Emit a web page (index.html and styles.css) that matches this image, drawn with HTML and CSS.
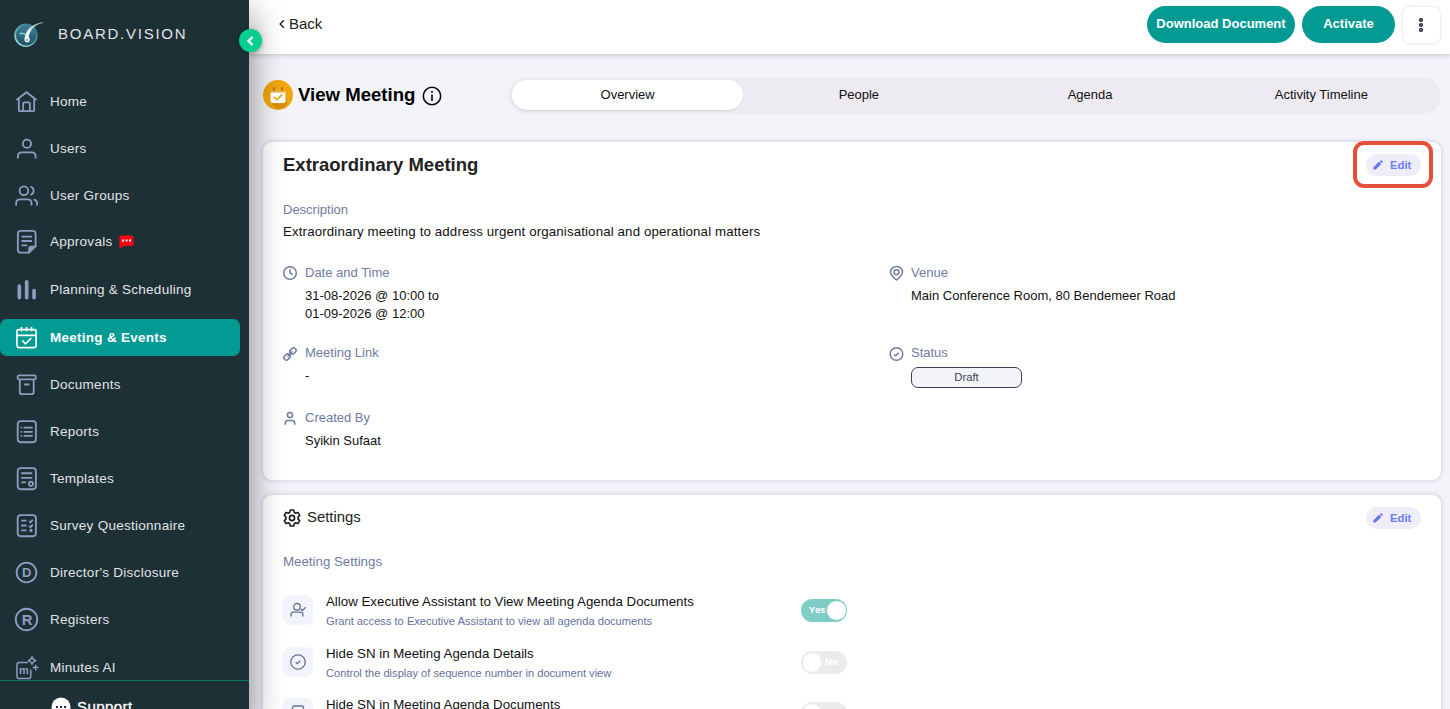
FILE: index.html
```html
<!DOCTYPE html>
<html lang="en">
<head>
    <meta charset="UTF-8">
    <title>Board.Vision - View Meeting</title>
    <meta name="viewport" content="width=device-width, initial-scale=1.0">
    <link rel="stylesheet" href="styles.css">
</head>
<body>
<div class="app">

    <!-- Sidebar -->
    <aside class="sidebar">
        <div class="brand">
            <svg class="brand-logo" width="30" height="28" viewBox="0 0 30 28">
                <defs>
                    <linearGradient id="logoFill" x1="0" y1="0" x2="0" y2="1">
                        <stop offset="0" stop-color="#3f7f9b"/>
                        <stop offset="1" stop-color="#1f5063"/>
                    </linearGradient>
                    <linearGradient id="logoRing" x1="0" y1="1" x2="1" y2="0">
                        <stop offset="0" stop-color="#b5efe4"/>
                        <stop offset="0.5" stop-color="#4f9fa3"/>
                        <stop offset="1" stop-color="#2b6c7e"/>
                    </linearGradient>
                </defs>
                <circle cx="12" cy="15.300" r="10.900" fill="url(#logoFill)" stroke="url(#logoRing)" stroke-width="1.600"/>
                <path d="M28.800 2.500C21 4.500 17 9 14.800 15.500C14.400 17 16.200 18.500 15.700 20.500C15 23 11.300 23 10.600 20.500C10.300 18 11 15.500 11.900 13.500C14 8 20 3.800 28.800 2.500Z" fill="#eefaf8"/>
                <path d="M28.800 2.500C23 3.600 19 6.200 16.500 10C19.500 5.800 23 3.600 28.800 2.500Z" fill="#7fbdb8" stroke="#7fbdb8" stroke-width=".6"/>
                <circle cx="13.200" cy="20" r=".8" fill="#24596c"/>
                <path d="M5.500 13.500h4.500q1.500.2 1.600 2.200" fill="none" stroke="#8fd0cc" stroke-width="1.600"/>
            </svg>
            <span class="brand-name">BOARD.VISION</span>
        </div>
        <nav class="menu">
            <a class="menu-item">
                <svg class="menu-icon" viewBox="0 0 24 24"><path d="M1.500 10.500 12 2.300l10.500 8.200M4 9v12q0 1 1 1h14q1 0 1-1V9M8.500 21.500V14q0-1 1-1h5q1 0 1 1v7.500"/></svg>
                <span>Home</span>
            </a>
            <a class="menu-item">
                <svg class="menu-icon" viewBox="0 0 24 24"><circle cx="12.500" cy="7" r="4.300"/><path d="M3 22.500v-2.500q0-4 4-4h10.500q4 0 4 4v2.500"/></svg>
                <span>Users</span>
            </a>
            <a class="menu-item">
                <svg class="menu-icon" viewBox="0 0 24 24"><circle cx="9.300" cy="7" r="4.500"/><path d="M1.200 22.500v-2.500q0-4 4-4h8q4 0 4 4v2.500M16 2.700a4.400 4.400 0 0 1 0 8.600M19.500 16q3.500.8 3.500 4v2.500"/></svg>
                <span>User Groups</span>
            </a>
            <a class="menu-item menu-item-alert">
                <svg class="menu-icon" viewBox="0 0 24 24"><path d="M14.500 23.700H6q-3 0-3-3V4q0-3 3-3h12.500q3 0 3 3v12.500zM6.800 7h11M6.800 11.500h11M6.800 16h6"/><path class="solid" d="M14.800 23v-3.500q0-2.200 2.200-2.200h4z"/></svg>
                <span>Approvals</span>
                <svg class="menu-alert" width="15" height="14" viewBox="0 0 15 14"><path d="M2 .5h11q1.500 0 1.500 1.500v7.500q0 1.500-1.500 1.500H5L.5 13.500V2q0-1.500 1.500-1.500z" fill="#fb0310"/><path d="M3 4.500h2v2H3zM6.500 4.500h2v2h-2zM10 4.500h2v2h-2z" fill="#fff"/></svg>
            </a>
            <a class="menu-item">
                <svg class="menu-icon" viewBox="0 0 24 24"><path class="bars" d="M4.500 8.500V20.500M12.200 4V20.500M19.900 13V20.500"/></svg>
                <span>Planning &amp; Scheduling</span>
            </a>
            <a class="menu-item active">
                <svg class="menu-icon" viewBox="0 0 24 24"><path d="M4 3.800h16q2 0 2 2V20q0 2.500-2.500 2.500h-15Q2 22.500 2 20V5.800q0-2 2-2zM2 9.800h20M6.800 1v4.500M12 1v4.500M17.200 1v4.500M7.500 15l3.500 3.500 6-6"/></svg>
                <span>Meeting &amp; Events</span>
            </a>
            <a class="menu-item">
                <svg class="menu-icon" viewBox="0 0 24 24"><path d="M4.200 2.500h16q1.500 0 1.500 1.500v1.200q0 1.500-1.500 1.500h-16q-1.500 0-1.500-1.500V4q0-1.500 1.500-1.500zM5 6.700V20q0 2 2 2h10.500q2 0 2-2V6.700M9.500 12h5.500"/></svg>
                <span>Documents</span>
            </a>
            <a class="menu-item">
                <svg class="menu-icon" viewBox="0 0 24 24"><rect x="2.800" y="1.200" width="19" height="22" rx="3"/><path d="M9 8h9.500M9 12.300h9.500M9 16.600h9.500M5.800 8h1.400M5.800 12.300h1.400M5.800 16.600h1.400"/></svg>
                <span>Reports</span>
            </a>
            <a class="menu-item">
                <svg class="menu-icon" viewBox="0 0 24 24"><rect x="2.800" y="1.200" width="19" height="22" rx="3"/><path d="M6.500 6.500h11.500M6.500 11.300h11.500M6.500 16h5"/><circle cx="16.600" cy="17.600" r="2.200"/></svg>
                <span>Templates</span>
            </a>
            <a class="menu-item">
                <svg class="menu-icon" viewBox="0 0 24 24"><rect x="2.800" y="1.200" width="19" height="22" rx="3"/><path d="M6.500 7h5.500M6.500 12h5.500M6.500 17h5.500M14.800 7.500l1.300 1.200 2.500-2.700M14.800 12.500l1.300 1.200 2.500-2.700M15.500 16l2.500 2.500M18 16l-2.500 2.500"/></svg>
                <span>Survey Questionnaire</span>
            </a>
            <a class="menu-item">
                <svg class="menu-icon" viewBox="0 0 24 24"><circle cx="12" cy="12" r="10.300"/><text x="12.200" y="16.800" text-anchor="middle">D</text></svg>
                <span>Director's Disclosure</span>
            </a>
            <a class="menu-item">
                <svg class="menu-icon" viewBox="0 0 24 24"><circle cx="12" cy="12" r="11.200"/><text class="wide" x="12.600" y="17.500" text-anchor="middle">R</text></svg>
                <span>Registers</span>
            </a>
            <a class="menu-item">
                <svg class="menu-icon" viewBox="0 0 24 24"><path class="thin" d="M13.500 6.700H4.500q-2.500 0-2.500 2.500V21q0 2.500 2.500 2.500H14q2.500 0 2.500-2.500v-7M17.800 0.500q.6 3.700 4.300 4.300-3.700.6-4.300 4.300-.6-3.700-4.300-4.300 3.700-.6 4.300-4.300zM21.500 9v6M18.500 12h6"/><text class="small" x="9.300" y="18.500" text-anchor="middle">m</text></svg>
                <span>Minutes AI</span>
            </a>
        </nav>
        <div class="support">
            <svg width="20" height="20" viewBox="0 0 20 20"><circle cx="10" cy="10" r="9.500" fill="#fff"/><path d="M5 9h2v2H5zM9 9h2v2H9zM13 9h2v2h-2z" fill="#1d3036"/></svg>
            <span>Support</span>
        </div>
        <button class="collapse">
            <svg width="10" height="12" viewBox="0 0 10 12"><path d="M6.500 2 2.500 6l4 4" fill="none" stroke="#fff" stroke-width="2.400"/></svg>
        </button>
    </aside>

    <main class="main">
        <!-- Top bar -->
        <header class="topbar">
            <a class="back">
                <svg width="6" height="10" viewBox="0 0 6 10"><path d="M4.800 1.200 1.200 5l3.600 3.800" fill="none" stroke="#222" stroke-width="1.400"/></svg>
                <span>Back</span>
            </a>
            <div class="actions">
                <button class="btn btn-download">Download Document</button>
                <button class="btn btn-activate">Activate</button>
                <button class="btn-more">
                    <svg width="6" height="16" viewBox="0 0 6 16" fill="none" stroke="#1f2138" stroke-width="1.500"><circle cx="3" cy="3" r="1.300"/><circle cx="3" cy="8" r="1.300"/><circle cx="3" cy="13" r="1.300"/></svg>
                </button>
            </div>
        </header>

        <!-- Title and tabs -->
        <div class="page-head">
            <div class="page-title">
                <svg width="30" height="30" viewBox="0 0 30 30">
                    <circle cx="15" cy="15" r="15" fill="#f4a50a"/>
                    <path d="M8 22.500 14 29.500q7-.5 10.500-5l-2.500-13z" fill="#d9910a"/>
                    <path d="M7.500 12.500V11q0-1.500 1.500-1.500h12q1.500 0 1.500 1.500v1.500z" fill="#eeb23c"/>
                    <path d="M11 7v4M19 7v4" stroke="#a96f0c" stroke-width="1.500"/>
                    <path d="M7.500 12.500h15V21q0 2-2 2h-11q-2 0-2-2z" fill="#fff"/>
                    <path d="m10.800 16.800 3.200 3 5.300-5.400" fill="none" stroke="#f4a50a" stroke-width="1.500"/>
                </svg>
                <h1>View Meeting</h1>
                <svg class="info" width="20" height="20" viewBox="0 0 20 20"><circle cx="10" cy="10" r="8.700" fill="none" stroke="#111" stroke-width="1.600"/><path d="M10 8.500v6.500M10 5v1.800" fill="none" stroke="#111" stroke-width="1.700"/></svg>
            </div>
            <div class="tabs">
                <a class="tab selected">Overview</a>
                <a class="tab">People</a>
                <a class="tab">Agenda</a>
                <a class="tab">Activity Timeline</a>
            </div>
        </div>

        <!-- Meeting details -->
        <section class="card details">
            <div class="card-head">
                <h2>Extraordinary Meeting</h2>
                <button class="edit highlighted">
                    <svg width="10" height="10" viewBox="0 0 10 10" fill="#6176f5"><path d="M.5 9.500V7.300L6 1.800 8.200 4 2.700 9.500zM6.700 1.200 7.600.4q.5-.4 1 0L9.600 1.400q.4.500 0 1L8.800 3.300z"/></svg>
                    Edit
                </button>
            </div>
            <div class="description">
                <div class="label">Description</div>
                <p>Extraordinary meeting to address urgent organisational and operational matters</p>
            </div>
            <div class="fields">
                <div class="field">
                    <svg viewBox="0 0 14 14"><circle cx="7" cy="7" r="6.300"/><path d="M7 3.200V7l2.600 1.500"/></svg>
                    <div>
                        <div class="label">Date and Time</div>
                        <div class="value">31-08-2026 @ 10:00 to<br>01-09-2026 @ 12:00</div>
                    </div>
                </div>
                <div class="field">
                    <svg viewBox="0 0 14 14"><path d="M7.500 14Q1.500 9 1.500 6a6 5.500 0 0 1 12 0Q13.500 9 7.500 14z"/><circle cx="7.500" cy="6.200" r="2.400"/></svg>
                    <div>
                        <div class="label">Venue</div>
                        <div class="value">Main Conference Room, 80 Bendemeer Road</div>
                    </div>
                </div>
                <div class="field">
                    <svg class="link-icon" viewBox="0 0 14 14"><g transform="rotate(-45 7 7)"><rect x="-.5" y="4.600" width="6.600" height="4.800" rx="2.200"/><rect x="7.900" y="4.600" width="6.600" height="4.800" rx="2.200"/><path d="M3.500 7h7"/></g></svg>
                    <div>
                        <div class="label">Meeting Link</div>
                        <div class="value">-</div>
                    </div>
                </div>
                <div class="field">
                    <svg class="status-icon" viewBox="0 0 14 14"><circle cx="7.500" cy="7" r="6.300"/><path d="m5.100 7.200 1.600 1.500 3-3"/></svg>
                    <div>
                        <div class="label">Status</div>
                        <div class="status">Draft</div>
                    </div>
                </div>
                <div class="field">
                    <svg viewBox="0 0 14 14"><circle cx="7" cy="4" r="2.600"/><path d="M2.300 13.800v-1.500q0-2.700 2.700-2.700h4q2.700 0 2.700 2.700v1.500"/></svg>
                    <div>
                        <div class="label">Created By</div>
                        <div class="value">Syikin Sufaat</div>
                    </div>
                </div>
            </div>
        </section>

        <!-- Settings -->
        <section class="card settings">
            <div class="card-head">
                <h3>
                    <svg width="18" height="18" viewBox="0 0 18 18" fill="none" stroke="#1c1c1c" stroke-width="1.600" stroke-linejoin="round"><path d="M7.300 1h3.400l.5 2.300 1.500.9 2.300-.8 1.700 3L15 8.100v1.800l1.700 1.700-1.700 3-2.300-.8-1.500.9-.5 2.300H7.300l-.5-2.300-1.500-.9-2.300.8-1.700-3L3 9.900V8.100L1.300 6.400l1.700-3 2.300.8 1.500-.9z"/><circle cx="9" cy="9" r="2.600"/></svg>
                    <span>Settings</span>
                </h3>
                <button class="edit">
                    <svg width="10" height="10" viewBox="0 0 10 10" fill="#6176f5"><path d="M.5 9.500V7.300L6 1.800 8.200 4 2.700 9.500zM6.700 1.200 7.600.4q.5-.4 1 0L9.600 1.400q.4.500 0 1L8.800 3.300z"/></svg>
                    Edit
                </button>
            </div>
            <div class="settings-label">Meeting Settings</div>
            <div class="setting">
                <span class="tile"><svg viewBox="0 0 16 16"><circle cx="7" cy="4.800" r="3.300"/><path d="M1 14.500V13q0-2.800 2.800-2.800h6.400Q13 10.200 13 13v1.500M10.800 7l1.700 1.500 3.200-3.300"/></svg></span>
                <div class="setting-text">
                    <div class="setting-name">Allow Executive Assistant to View Meeting Agenda Documents</div>
                    <div class="setting-info">Grant access to Executive Assistant to view all agenda documents</div>
                </div>
                <span class="toggle on">Yes</span>
            </div>
            <div class="setting">
                <span class="tile"><svg viewBox="0 0 16 16"><circle cx="8" cy="8" r="7.200"/><path d="m5.600 8.200 1.600 1.500 3.200-3"/></svg></span>
                <div class="setting-text">
                    <div class="setting-name">Hide SN in Meeting Agenda Details</div>
                    <div class="setting-info">Control the display of sequence number in document view</div>
                </div>
                <span class="toggle">No</span>
            </div>
            <div class="setting">
                <span class="tile"><svg viewBox="0 0 16 16"><rect x="2.500" y="1" width="11" height="14" rx="2"/></svg></span>
                <div class="setting-text">
                    <div class="setting-name">Hide SN in Meeting Agenda Documents</div>
                </div>
                <span class="toggle">No</span>
            </div>
        </section>
    </main>
</div>
</body>
</html>
```
FILE: styles.css
```css
* {
    box-sizing: border-box;
}

body {
    margin: 0;
    font-family: "Liberation Sans", Arial, sans-serif;
    font-size: 13px;
    color: #111;
    background-color: #f3f4f9;
    overflow: hidden;
}

button {
    font-family: inherit;
    border: none;
    padding: 0;
    cursor: pointer;
}

h1, h2, h3, p {
    margin: 0;
}

.app {
    display: flex;
    height: 709px;
    overflow: hidden;
}

/* Sidebar */
.sidebar {
    position: relative;
    z-index: 2;
    display: flex;
    flex-direction: column;
    flex: 0 0 249px;
    height: 709px;
    background-color: #1d3036;
    color: #e1e3e6;
    box-shadow: 1px 16px 30px 3px rgba(0, 0, 0, 0.4);
}

.brand {
    display: flex;
    align-items: center;
    flex: 0 0 83px;
    padding: 0 0 16px 14px;
}

.brand-name {
    margin-left: 14px;
    font-size: 15px;
    letter-spacing: 1.75px;
}

.menu {
    display: flex;
    flex-direction: column;
    flex: 0 0 597px;
    gap: 9.6px;
    overflow: hidden;
}

.menu-item {
    display: flex;
    align-items: center;
    flex: 0 0 37.55px;
    width: 240px;
    padding: 0 0 0.8px 14.5px;
    border-radius: 7px;
    font-size: 13.5px;
    letter-spacing: 0.27px;
}

.menu-item.active {
    background-color: #029a93;
    color: #fff;
    font-weight: bold;
}

.menu-item-alert {
    padding-bottom: 2.5px;
}

.menu-icon {
    width: 23px;
    height: 23px;
    margin-right: 12.5px;
    overflow: visible;
    fill: none;
    stroke: #8f9cc0;
    stroke-width: 1.9;
}

.menu-item.active .menu-icon {
    stroke: #fff;
    stroke-width: 1.7;
}

.menu-icon .solid {
    fill: #8f9cc0;
}

.menu-icon .thin {
    stroke-width: 1.5;
}

.menu-icon .bars {
    stroke-width: 3.8;
    stroke-linecap: round;
}

.menu-icon text {
    fill: #8f9cc0;
    stroke: none;
    font-size: 13.5px;
    font-weight: bold;
    letter-spacing: 0;
}

.menu-icon .wide {
    font-size: 15.5px;
}

.menu-icon .small {
    font-size: 11.5px;
}

.menu-alert {
    margin-left: 7px;
}

.support {
    display: flex;
    flex: 1;
    gap: 6px;
    padding: 16px 0 0 51px;
    border-top: 1px solid #0d7d5e;
    color: #fff;
    font-size: 15px;
    line-height: 20px;
    letter-spacing: 0.45px;
    -webkit-text-stroke: 0.3px #fff;
}

.support svg {
    flex: none;
}

.collapse {
    position: absolute;
    top: 29px;
    right: -13px;
    display: flex;
    align-items: center;
    justify-content: center;
    width: 23px;
    height: 23px;
    border-radius: 50%;
    background-color: #05ce91;
    box-shadow: 0 1px 4px rgba(0, 0, 0, 0.3);
}

/* Top bar */
.main {
    flex: 1;
    min-width: 0;
}

.topbar {
    display: flex;
    justify-content: space-between;
    height: 54px;
    padding: 6px 9px 0 30px;
    background-color: #fff;
    box-shadow: 0 1px 5px rgba(40, 45, 75, 0.25);
}

.back {
    display: flex;
    align-items: center;
    gap: 4px;
    height: 36px;
    font-size: 15px;
    color: #222;
}

.back span {
    padding-bottom: 1px;
}

.actions {
    display: flex;
    gap: 7px;
}

.btn {
    height: 37px;
    padding-bottom: 2px;
    border-radius: 19px;
    background-color: #029a93;
    color: #fff;
    font-size: 13px;
    font-weight: bold;
}

.btn-download {
    width: 148px;
}

.btn-activate {
    width: 93px;
}

.btn-more {
    display: flex;
    align-items: center;
    justify-content: center;
    width: 39px;
    height: 38px;
    padding-right: 1px;
    border: 1px solid #f1f1f4;
    border-radius: 8px;
    background-color: #fff;
    box-shadow: 0 0 3px rgba(0, 0, 0, 0.08);
}

/* Title and tabs */
.page-head {
    display: flex;
    justify-content: space-between;
    margin: 23px 9px 28px 14px;
}

.page-title {
    display: flex;
    align-items: center;
    gap: 5px;
    height: 36px;
}

.page-title h1 {
    font-size: 18.6px;
    color: #000;
}

.page-title .info {
    margin: 2px 0 0 2px;
}

.tabs {
    display: grid;
    grid-template-columns: repeat(4, 1fr);
    width: 933px;
    height: 37px;
    padding: 3px 4px 4px;
    border-radius: 19px;
    background-color: #edeaf1;
}

.tab {
    line-height: 30px;
    border-radius: 16px;
    text-align: center;
}

.tab.selected {
    background-color: #fff;
    box-shadow: 0 1px 2px rgba(0, 0, 0, 0.1);
}

/* Cards */
.card {
    margin: 0 9px 14.5px 14px;
    padding: 0 20px;
    border-radius: 9px;
    background-color: #fff;
    box-shadow: 0 0 5px rgba(40, 45, 75, 0.22);
}

.details {
    height: 338px;
}

.settings {
    height: 300px;
}

.card-head {
    display: flex;
    align-items: center;
    justify-content: space-between;
    height: 46px;
}

.settings .card-head {
    height: 47px;
}

.card-head h2 {
    font-size: 18.5px;
    color: #222;
}

.card-head h3 {
    display: flex;
    align-items: center;
    gap: 6px;
    font-size: 14.9px;
    font-weight: normal;
    color: #222;
}

.card-head h3 span {
    padding-bottom: 2px;
}

.edit {
    position: relative;
    display: flex;
    align-items: center;
    gap: 7px;
    width: 55px;
    height: 22px;
    padding-left: 7px;
    border-radius: 11px;
    background-color: #efedf7;
    color: #6b7cf7;
    font-size: 11.3px;
    font-weight: bold;
}

.edit.highlighted::after {
    content: "";
    position: absolute;
    inset: -13px -12px -12px -13px;
    border: 4px solid #e4503c;
    border-radius: 11px;
}

.label {
    color: #6f7b9f;
    line-height: 18px;
}

.description {
    margin-top: 13px;
}

.description p {
    margin-top: 4px;
    font-size: 13.3px;
    line-height: 18px;
    letter-spacing: 0.13px;
}

.fields {
    display: grid;
    grid-template-columns: 606px 1fr;
    grid-template-rows: 80px 65px auto;
    margin-top: 23px;
}

.field {
    display: flex;
    gap: 8px;
}

.field svg {
    flex: none;
    width: 14px;
    height: 14px;
    margin-top: 2px;
    overflow: visible;
    fill: none;
    stroke: #6f7b9f;
    stroke-width: 1.5;
}

.field .link-icon,
.field .status-icon {
    margin-top: 3px;
}

.value {
    margin-top: 5px;
    line-height: 18px;
}

.status {
    width: 111px;
    height: 21px;
    margin-top: 5px;
    border: 1px solid #3d3f5c;
    border-radius: 7px;
    background-color: #f3f4f8;
    color: #444659;
    font-size: 11.3px;
    line-height: 19px;
    text-align: center;
}

/* Settings */
.settings-label {
    margin: 11px 0 24.4px;
    color: #6f7b9f;
    font-size: 13.3px;
    line-height: 18px;
}

.setting {
    display: flex;
    height: 51.8px;
}

.tile {
    display: flex;
    align-items: center;
    justify-content: center;
    width: 30px;
    height: 30px;
    border-radius: 7px;
    background-color: #f1f4fa;
}

.tile svg {
    width: 16px;
    height: 16px;
    fill: none;
    stroke: #66719b;
    stroke-width: 1.3;
}

.setting-text {
    width: 475px;
    margin: -2px 0 0 13px;
}

.setting-name {
    font-size: 13.3px;
    line-height: 18px;
}

.setting-info {
    margin-top: 2px;
    color: #66719b;
    font-size: 11.12px;
    line-height: 16px;
}

.toggle {
    display: flex;
    align-items: center;
    justify-content: flex-end;
    gap: 3px;
    width: 46px;
    height: 23px;
    margin-top: 4px;
    padding: 0 9px 2px 2px;
    border-radius: 12px;
    background-color: #ebebeb;
    color: #fff;
    font-family: "Open Sans", sans-serif;
    font-size: 9.5px;
    font-weight: bold;
}

.toggle::before {
    content: "";
    position: relative;
    top: 1px;
    width: 19px;
    height: 19px;
    border-radius: 50%;
    background-color: #fff;
}

.toggle.on {
    flex-direction: row-reverse;
    justify-content: flex-start;
    padding: 0 1px 2px 8px;
    gap: 2px;
    background-color: #7fcdc6;
}

.toggle.on::before {
    order: -1;
}
```
